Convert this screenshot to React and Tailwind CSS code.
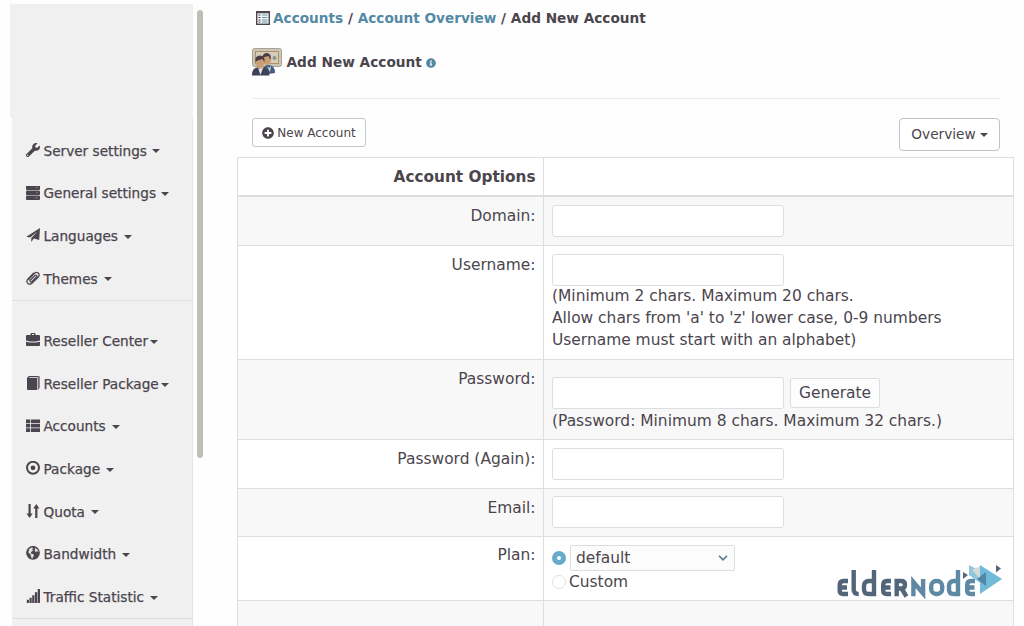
import React from "react";
import { FaWrench, FaPlusCircle, FaInfoCircle } from "react-icons/fa";

const Svg = ({ children }) => (
  <svg viewBox="0 0 14 14" className="h-[14px] w-[14px] shrink-0" fill="currentColor">{children}</svg>
);

const ServerIcon = () => (
  <Svg>
    <rect x="0" y="-.5" width="14" height="4.500" rx="1" />
    <rect x="0" y="4.500" width="14" height="4.500" rx="1" />
    <rect x="0" y="9.500" width="14" height="4.500" rx="1" />
    <path d="M9 1.700h3M10 6.700h2M9 11.700h3" stroke="#87818a" strokeWidth=".8" />
  </Svg>
);
const PlaneIcon = () => (
  <Svg>
    <path d="M14 0 .3 8.800 4 9.600 11.500 3.500 5.300 10V14L7.800 10.500 13.200 12Z" />
  </Svg>
);
const PaperclipIcon = () => (
  <Svg>
    <path d="M2.500 8.500 8.300 2.500q2-1.900 3.900-.5 2 2 .1 4L6.500 11.800q-2.500 2.300-4.700.6-1.900-2.100.2-4.500L7.500 2.200M4 9.500l5-5q1-.8 1.600-.1.700.8-.1 1.600L6 10.400q-1 .8-1.700.1-.7-.8.100-1.600" fill="none" stroke="currentColor" strokeWidth="1.250" strokeLinecap="round" />
  </Svg>
);
const BriefcaseIcon = () => (
  <Svg>
    <path d="M4.500 2V1q0-1 1-1h3q1 0 1 1v1H13q1 0 1 1v4.500L10 8.500H4L0 7.500V3q0-1 1-1ZM6 1v1h2V1Z" fillRule="evenodd" />
    <path d="M0 8.700l4 .9h6l4-.9V12q0 1-1 1H1q-1 0-1-1Z" />
  </Svg>
);
const BookIcon = () => (
  <Svg>
    <path d="M1 2 2.800 0H12.500V13H12V1.200H3.500L3 2h8.300v12H2q-1 0-1-1Z" />
    <path d="M12 .3h1.800V12l-1.500 1.500H12Z" fill="#77717a" />
  </Svg>
);
const ListIcon = () => (
  <Svg>
    <path d="M0 .5h4v3.700H0ZM4.800 .5H14v3.700H4.800ZM0 4.900h4v3.700H0ZM4.800 4.900H14v3.700H4.800ZM0 9.300h4V13H0ZM4.800 9.300H14V13H4.800Z" />
  </Svg>
);
const RecordIcon = () => (
  <Svg>
    <circle cx="7" cy="6.800" r="6" fill="none" stroke="currentColor" strokeWidth="2" />
    <circle cx="7" cy="6.800" r="2.400" />
  </Svg>
);
const SortIcon = () => (
  <Svg>
    <path d="M2.500 0h2.200v9.500h2L3.600 14 .5 9.500h2ZM9.200 14h2.200V4.500h2L10.300 0 7.200 4.500h2Z" />
  </Svg>
);
const GlobeIcon = () => (
  <Svg>
    <circle cx="7" cy="6.800" r="6.900" />
    <path d="M3.200 3 6 1.300 7 2.200 6.200 3.500 7.300 4.300 5.200 6 4.700 7.500 7.500 8.300 7.800 10 6 12.700 5 10.800 4.600 8.600 2.300 6.500ZM9 2l2.500 1.500L12.700 6 11 5.300 9.400 6 8.700 4.200Z" fill="#e3e2e3" />
  </Svg>
);
const SignalIcon = () => (
  <Svg>
    <path d="M.8 10.700h2.200V14H.8ZM3.500 8.700h2.200V14H3.500ZM6.200 6.200h2.200V14H6.200ZM8.900 3.200h2.300V14H8.900ZM11.700 0H14v14h-2.300Z" />
  </Svg>
);

const Caret = () => <span className="h-0 w-0 border-x-4 border-t-4 border-x-transparent border-t-[#4b454d]" />;

const topMenu = [
  { label: "Server settings", icon: <FaWrench size={14} />, gap: "gap-[5px]" },
  { label: "General settings", icon: <ServerIcon />, gap: "gap-[5px]" },
  { label: "Languages", icon: <PlaneIcon />, gap: "gap-[6px]" },
  { label: "Themes", icon: <PaperclipIcon />, gap: "gap-[6px]" },
];
const bottomMenu = [
  { label: "Reseller Center", icon: <BriefcaseIcon />, gap: "gap-[2px]" },
  { label: "Reseller Package", icon: <BookIcon />, gap: "gap-[2px]" },
  { label: "Accounts", icon: <ListIcon />, gap: "gap-[6px]" },
  { label: "Package", icon: <RecordIcon />, gap: "gap-[6px]" },
  { label: "Quota", icon: <SortIcon />, gap: "gap-[6px]" },
  { label: "Bandwidth", icon: <GlobeIcon />, gap: "gap-[6px]" },
  { label: "Traffic Statistic", icon: <SignalIcon />, gap: "gap-[6px]" },
];

function MenuItem({ label, icon, gap }) {
  return (
    <li className="flex h-[42.6px] items-center pl-[14px]">
      <span className="mb-[2px] mr-[3.5px] flex w-[14px]">{icon}</span>
      <span className={"flex items-center " + gap}>
        <span className="text-[13.65px] [-webkit-text-stroke:0.25px_#4b454d]">{label}</span>
        <span className="mt-[1px] flex"><Caret /></span>
      </span>
    </li>
  );
}

function Sidebar() {
  return (
    <aside className="ml-[10px] mt-1 h-[622px] w-[183px] shrink-0 overflow-hidden">
      <div className="h-[114px] bg-[#f0f0f0]" />
      <div className="ml-[2px] h-[508px] border-r border-[#e2e5e5] bg-[#f0f0f0] pt-[11.7px]">
        <ul className="h-[171px] border-b border-[#dadfdf]">{topMenu.map((m) => <MenuItem key={m.label} {...m} />)}</ul>
        <ul className="h-[318.3px] border-b border-[#dadfdf] pt-[19.5px]">{bottomMenu.map((m) => <MenuItem key={m.label} {...m} />)}</ul>
      </div>
    </aside>
  );
}

const Input = () => <input className="block h-[32px] w-[232px] rounded-[3px] border border-[#dcdfdf] bg-white px-2 outline-none" />;

function Row({ label, height, shaded, children, pad = "pt-2" }) {
  return (
    <div className={"flex border-b border-[#dcdfdf] " + height + (shaded ? " bg-[#f8f8f8]" : " bg-white")}>
      <div className="w-[306px] shrink-0 border-r border-[#dcdfdf] pr-[7.5px] pt-[8px] text-right leading-[22px]">{label}</div>
      <div className={"flex-1 pl-2 leading-[22.2px] " + pad}>{children}</div>
    </div>
  );
}

const UsersIcon = () => (
  <svg viewBox="0 0 30 30" className="h-[30px] w-[30px]">
    <rect x=".5" y="1.500" width="29" height="18" rx="2" fill="#c9c5b8" stroke="#a7a397" />
    <rect x="3.500" y="4.500" width="23" height="12" fill="#d3cdbb" stroke="#b58d64" />
    <circle cx="22.500" cy="11" r="2" fill="#8d9189" />
    <ellipse cx="15" cy="12.500" rx="4" ry="6" fill="#c99f73" />
    <path d="M10.500 11q0-5 4.500-5 5 1 3.500 7l-2-4-4 1Z" fill="#4b3d46" />
    <path d="M10 28q0-10 6-10 7 0 7 8Z" fill="#445d80" />
    <ellipse cx="8" cy="16" rx="3.800" ry="6" fill="#c99f73" />
    <path d="M3.500 15q-1-6.500 4.500-6.500 5.500 0 4.500 7l-2-3.500-5 1.500Z" fill="#4b3d46" />
    <path d="M0 28.500q0-8 6-8l2.500 3 3-3q6 1 6 8Z" fill="#3d4257" />
    <path d="m6 21 2.500 2 2.500-2-2.500 7Z" fill="#e4e5e3" />
    <path d="m15 19 2 2 2-2-1 6Z" fill="#d9deda" />
  </svg>
);

const Logo = () => (
  <svg viewBox="0 0 168 36" className="absolute left-[835px] top-[563px] h-[36px] w-[168px]">
    <g fill="none" strokeWidth="4.400">
      <g stroke="#526579">
        <path d="M13 18H8.500Q4.700 18 4.700 22v5.500q0 3.500 3.500 3.500H13M5 24.500h7" />
        <path d="M18.700 7v19.500q0 4.500 5 4.500" />
        <path d="M39 7v24H34q-5 0-5-4.500V23q0-5 5-5h4" />
        <path d="M56 18H52q-3.800 0-3.800 4v5.500q0 3.500 3.500 3.500H56M49 24.500h6.500" />
        <path d="M61.700 33.200V18H66q4 0 4 3.700T66 25.500h-3M66.500 25.500l5 8" />
      </g>
      <g stroke="#5f88a5">
        <path d="M78.400 33.200V19l9.700 11.500V16" />
        <rect x="96.200" y="18" width="11" height="13" rx="5" />
        <path d="M123 7v24H119q-5 0-5-4.500V23q0-5 5-5h3" />
        <path d="M140 18h-4q-3.800 0-3.800 4v5.500q0 3.500 3.500 3.500H140M133 24.500h6.500" />
      </g>
    </g>
    <path d="M145 2v29l22-15Z" fill="#72bad9" />
    <path d="m134 2 11 6v12l-11-8Z" fill="#8ec6de" />
    <path d="m137 7 8-4v13Z" fill="#d6d9d9" />
    <path d="M151 9v14l-9-7Z" fill="#5385a7" />
    <path d="m128 9 5 3-5 4ZM161 2l5 3.500-5 4Z" fill="#52677b" />
  </svg>
);

export default function App() {
  return (
    <div className="relative flex h-[626px] w-[1024px] overflow-hidden bg-[#fefefe] font-['DejaVu_Sans',sans-serif] text-[#4b454d]">
      <Sidebar />
      <div className="ml-[4px] mt-[10px] h-[448px] w-[6px] shrink-0 rounded-full bg-[#c0beb7]" />
      <main className="ml-[34px] w-[778px] shrink-0">
        <nav className="flex h-[36px] items-center whitespace-pre pl-[19px] text-[13.65px] font-bold">
          <svg viewBox="0 0 14 14" className="mr-[3px] h-[14px] w-[14px]">
            <rect x=".7" y=".7" width="12.600" height="12.600" fill="#f3f3f3" stroke="#4b454d" strokeWidth="1.400" />
            <path d="M1 1.500h12" stroke="#4b454d" strokeWidth="1.500" />
            <path d="M2.500 4h2M2.500 6.500h2M2.500 9h2M2.500 11h2" stroke="#4b454d" />
            <path d="M6 4h5.500M6 6.500h5.500M6 9h5.500M6 11h5.500" stroke="#6797ae" />
          </svg>
          <a className="text-[#5489a5]">Accounts</a> / <a className="text-[#5489a5]">Account Overview</a> / Add New Account
        </nav>
        <div className="mx-[15px] flex h-[63px] items-center border-b border-[#ebeded] pb-[10px]">
          <UsersIcon />
          <h1 className="ml-[4.5px] text-[13.7px] font-bold">Add New Account</h1>
          <FaInfoCircle size={10} className="ml-1 mt-[2px] text-[#5489a5]" />
        </div>
        <div className="flex h-[58px] justify-between px-[15px] pt-[19px]">
          <button className="flex h-[29px] w-[114px] items-center justify-center gap-[3px] rounded-[3px] border border-[#c5c8c8] bg-white text-[12px]">
            <FaPlusCircle size={12} />New Account
          </button>
          <button className="flex h-[33px] w-[101px] items-center justify-center gap-1 rounded-[4px] border border-[#c0c3c3] bg-white text-[13.7px]">
            Overview<Caret />
          </button>
        </div>
        <section className="w-[777px] border-x border-t border-[#dcdfdf] text-[15.45px]">
          <Row height="h-[39px] border-b-2" label={<b className="text-[15.3px]">Account Options</b>} />
          <Row height="h-[49px]" label="Domain:" shaded><Input /></Row>
          <Row height="h-[114px]" label="Username:">
            <Input />
            <p className="-mt-[1px]">(Minimum 2 chars. Maximum 20 chars.<br />Allow chars from 'a' to 'z' lower case, 0-9 numbers<br />Username must start with an alphabet)</p>
          </Row>
          <Row height="h-[80px]" label="Password:" shaded pad="pt-[17px]">
            <div className="flex items-center gap-[6px]">
              <Input />
              <button className="h-[30px] w-[90px] rounded-[2px] border border-[#dcdfdf] bg-[#fdfdfd]">Generate</button>
            </div>
            <p className="pt-[1px]">(Password: Minimum 8 chars. Maximum 32 chars.)</p>
          </Row>
          <Row height="h-[49px]" label="Password (Again):"><Input /></Row>
          <Row height="h-[48px]" label="Email:" shaded pad="pt-[7px]"><Input /></Row>
          <Row height="h-[64px]" label={<span className="relative -top-px">Plan:</span>} pad="pt-[8px]">
            <div className="flex items-center gap-[4px]">
              <span className="h-[14px] w-[14px] rounded-full border-[5px] border-[#66abcb] bg-white" />
              <div className="flex h-[26px] w-[165px] items-center justify-between rounded-[2px] border border-[#dcdfdf] bg-[#fcfcfc] pl-[5px] pr-[6px]">
                default
                <svg viewBox="0 0 10 6" className="h-[6px] w-[10px]" fill="none" stroke="#54788f" strokeWidth="1.600"><path d="m1 .8 4 4 4-4" /></svg>
              </div>
            </div>
            <div className="flex items-center gap-[3px]">
              <span className="h-[14px] w-[14px] rounded-full border border-[#dfe0e0] bg-white" />
              <span>Custom</span>
            </div>
          </Row>
          <Row height="h-[30px]" shaded />
        </section>
      </main>
      <Logo />
    </div>
  );
}
